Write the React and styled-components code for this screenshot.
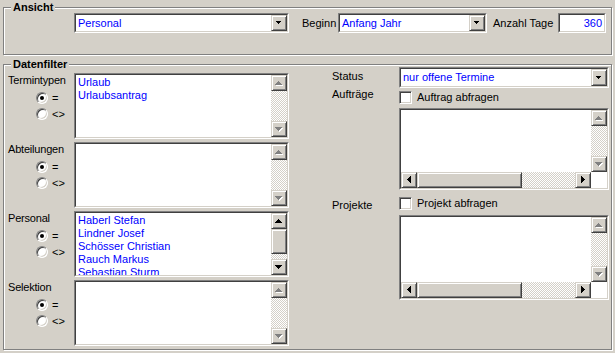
import React from 'react';
import styled, { createGlobalStyle } from 'styled-components';

const FACE = '#d4d0c8';
const SHADOW = '#808080';
const DARK = '#404040';
const BLUE = '#0000ff';

const GlobalStyle = createGlobalStyle`
  html, body { margin: 0; padding: 0; background: ${FACE}; }
  body {
    font-family: "Liberation Sans", Arial, sans-serif;
    font-size: 11px;
    line-height: 13px;
    color: #000;
  }
  * { box-sizing: border-box; }
`;

const Page = styled.div`
  width: 615px;
  height: 353px;
  padding: 0 3px;
  overflow: hidden;
`;

const Group = styled.fieldset`
  margin: ${p => p.$mt}px 0 0;
  padding: 0;
  min-width: 0;
  border: 1px solid ${SHADOW};
  box-shadow: inset 1px 1px 0 #fff, 1px 1px 0 #fff;
`;

const Legend = styled.legend`
  margin-left: 7px;
  padding: 0 2px;
  font-weight: bold;
  line-height: 5px;
  background: ${FACE};
`;

/* ---------- Ansicht ---------- */
const AnsichtBody = styled.div`
  display: flex;
  align-items: center;
  padding: 3px 5px 21px 70px;
`;

const InlineLabel = styled.span`
  flex: none;
  width: ${p => p.$w}px;
  margin-left: ${p => p.$ml || 0}px;
  white-space: nowrap;
`;

/* ---------- sunken frames ---------- */
const SunkenFrame = styled.div`
  flex: none;
  width: ${p => p.$w}px;
  height: ${p => p.$h}px;
  border: 1px solid;
  border-color: ${SHADOW} #fff #fff ${SHADOW};
  background: #fff;
`;

const SunkenInner = styled.div`
  height: 100%;
  border: 1px solid;
  border-color: ${DARK} ${FACE} ${FACE} ${DARK};
  display: flex;
  overflow: hidden;
`;

const FieldText = styled.div`
  flex: 1;
  min-width: 0;
  display: flex;
  align-items: center;
  justify-content: ${p => (p.$right ? 'flex-end' : 'flex-start')};
  padding: 0 2px;
  color: ${BLUE};
  white-space: nowrap;
  overflow: hidden;
`;

const Raised = styled.div`
  flex: none;
  width: ${p => p.$w || 16}px;
  height: ${p => (p.$h ? `${p.$h}px` : 'auto')};
  border: 1px solid;
  border-color: ${FACE} ${DARK} ${DARK} ${FACE};
  box-shadow: inset 1px 1px 0 #fff, inset -1px -1px 0 ${SHADOW};
  background: ${FACE};
`;

const ArrowSvg = styled.svg`
  display: block;
  flex: none;
`;

function Arrow({ dir, n, bw, bh, disabled }) {
  const vertical = dir === 'up' || dir === 'down';
  const w = vertical ? 2 * n - 1 : n;
  const h = vertical ? n : 2 * n - 1;
  const x0 = Math.floor((bw - w) / 2);
  const y0 = Math.floor((bh - h) / 2);
  const rects = [];
  for (let i = 0; i < n; i++) {
    if (dir === 'up') rects.push([x0 + n - 1 - i, y0 + i, 2 * i + 1, 1]);
    if (dir === 'down') rects.push([x0 + i, y0 + i, 2 * (n - 1 - i) + 1, 1]);
    if (dir === 'left') rects.push([x0 + i, y0 + n - 1 - i, 1, 2 * i + 1]);
    if (dir === 'right') rects.push([x0 + i, y0 + i, 1, 2 * (n - 1 - i) + 1]);
  }
  return (
    <ArrowSvg width={bw} height={bh} shapeRendering="crispEdges">
      {disabled &&
        rects.map(([x, y, rw, rh], i) => (
          <rect key={`s${i}`} x={x + 1} y={y + 1} width={rw} height={rh} fill="#fff" />
        ))}
      {rects.map(([x, y, rw, rh], i) => (
        <rect key={i} x={x} y={y} width={rw} height={rh} fill={disabled ? SHADOW : '#000'} />
      ))}
    </ArrowSvg>
  );
}

function Combo({ w, h, text }) {
  return (
    <SunkenFrame $w={w} $h={h}>
      <SunkenInner>
        <FieldText>{text}</FieldText>
        <Raised $w={16}>
          <Arrow dir="down" n={3} bw={14} bh={h - 6} />
        </Raised>
      </SunkenInner>
    </SunkenFrame>
  );
}

/* ---------- list boxes ---------- */
const ListGrid = styled.div`
  height: 100%;
  border: 1px solid;
  border-color: ${DARK} ${FACE} ${FACE} ${DARK};
  display: grid;
  grid-template-columns: 1fr 16px;
  grid-template-rows: ${p => (p.$hscroll ? '1fr 16px' : '1fr')};
  overflow: hidden;
`;

const Items = styled.div`
  min-height: 0;
  min-width: 0;
  overflow: hidden;
  padding: 1px 0 0 2px;
  color: ${BLUE};
  white-space: nowrap;
`;

const Item = styled.div`
  line-height: 13px;
`;

const VScroll = styled.div`
  min-height: 0;
  display: flex;
  flex-direction: column;
`;

const HScroll = styled.div`
  min-width: 0;
  display: flex;
`;

const Track = styled.div`
  flex: 1;
  background: repeating-conic-gradient(${FACE} 0 25%, #fff 0 50%) 0 0 / 2px 2px;
`;

const Corner = styled.div`
  background: #fff;
`;

function VBar({ enabled, thumb }) {
  return (
    <VScroll>
      <Raised $h={16}>
        <Arrow dir="up" n={4} bw={14} bh={14} disabled={!enabled} />
      </Raised>
      {thumb ? <Raised $h={thumb} /> : null}
      <Track />
      <Raised $h={16}>
        <Arrow dir="down" n={4} bw={14} bh={14} disabled={!enabled} />
      </Raised>
    </VScroll>
  );
}

function HBar({ thumb }) {
  return (
    <HScroll>
      <Raised $h={16}>
        <Arrow dir="left" n={4} bw={14} bh={14} />
      </Raised>
      <Raised $w={thumb} $h={16} />
      <Track />
      <Raised $h={16}>
        <Arrow dir="right" n={4} bw={14} bh={14} />
      </Raised>
    </HScroll>
  );
}

function ListBox({ w, h, items = [], enabled, thumb, hscroll }) {
  return (
    <SunkenFrame $w={w} $h={h}>
      <ListGrid $hscroll={hscroll}>
        <Items>
          {items.map(t => (
            <Item key={t}>{t}</Item>
          ))}
        </Items>
        <VBar enabled={enabled} thumb={thumb} />
        {hscroll && <HBar thumb={105} />}
        {hscroll && <Corner />}
      </ListGrid>
    </SunkenFrame>
  );
}

/* ---------- Datenfilter ---------- */
const FilterBody = styled.div`
  display: flex;
  align-items: flex-start;
  padding: 0 2px 3px 4px;
`;

const LeftCol = styled.div`
  display: flex;
  flex-direction: column;
  gap: 3px;
  padding-top: 6px;
`;

const FilterRow = styled.div`
  display: flex;
`;

const RowLabel = styled.div`
  flex: none;
  width: 66px;
`;

const LabelText = styled.div`
  margin-top: ${p => p.$dy || 0}px;
  white-space: nowrap;
  letter-spacing: ${p => (p.$tight ? '-0.2px' : 'normal')};
`;

const RadioGroup = styled.div`
  margin-top: 3px;
  padding-left: 28px;
  display: flex;
  flex-direction: column;
`;

const RadioRow = styled.div`
  height: 16px;
  display: flex;
  align-items: center;
  gap: 4px;
`;

const RadioCircle = styled.span`
  flex: none;
  width: 12px;
  height: 12px;
  border-radius: 50%;
  background: #fff;
  border: 1px solid;
  border-color: ${SHADOW} #fff #fff ${SHADOW};
  box-shadow: inset 1px 1px 0 ${DARK}, inset -1px -1px 0 ${FACE};
  display: flex;
  align-items: center;
  justify-content: center;
  &::after {
    content: '';
    display: ${p => (p.$checked ? 'block' : 'none')};
    width: 4px;
    height: 4px;
    border-radius: 50%;
    background: #000;
  }
`;

const RightCol = styled.div`
  flex: none;
  margin-left: 43px;
  width: 277px;
  display: flex;
  flex-direction: column;
`;

const FieldRow = styled.div`
  display: grid;
  grid-template-columns: 67px 210px;
  margin-top: ${p => p.$mt || 0}px;
`;

const CheckRow = styled.div`
  height: 13px;
  display: flex;
  align-items: center;
  gap: 5px;
  white-space: nowrap;
`;

const CheckBox = styled.span`
  flex: none;
  width: 13px;
  height: 13px;
  background: #fff;
  border: 1px solid;
  border-color: ${SHADOW} #fff #fff ${SHADOW};
  box-shadow: inset 1px 1px 0 ${DARK}, inset -1px -1px 0 ${FACE};
`;

function FilterBlock({ label, items, enabled, thumb }) {
  return (
    <FilterRow>
      <RowLabel>
        <LabelText $dy={1} $tight>{label}</LabelText>
        <RadioGroup>
          <RadioRow>
            <RadioCircle $checked />
            <span>=</span>
          </RadioRow>
          <RadioRow>
            <RadioCircle />
            <span>&lt;&gt;</span>
          </RadioRow>
        </RadioGroup>
      </RowLabel>
      <ListBox w={215} h={66} items={items} enabled={enabled} thumb={thumb} />
    </FilterRow>
  );
}

export default function App() {
  return (
    <>
      <GlobalStyle />
      <Page>
        <Group $mt={5}>
          <Legend>Ansicht</Legend>
          <AnsichtBody>
            <Combo w={215} h={20} text="Personal" />
            <InlineLabel $ml={13} $w={36}>Beginn</InlineLabel>
            <Combo w={149} h={20} text="Anfang Jahr" />
            <InlineLabel $ml={6} $w={65}>Anzahl Tage</InlineLabel>
            <SunkenFrame $w={48} $h={20}>
              <SunkenInner>
                <FieldText $right>360</FieldText>
              </SunkenInner>
            </SunkenFrame>
          </AnsichtBody>
        </Group>

        <Group $mt={7}>
          <Legend>Datenfilter</Legend>
          <FilterBody>
            <LeftCol>
              <FilterBlock label="Termintypen" items={['Urlaub', 'Urlaubsantrag']} />
              <FilterBlock label="Abteilungen" items={[]} />
              <FilterBlock
                label="Personal"
                items={[
                  'Haberl Stefan',
                  'Lindner Josef',
                  'Schösser Christian',
                  'Rauch Markus',
                  'Sebastian Sturm',
                ]}
                enabled
                thumb={25}
              />
              <FilterBlock label="Selektion" items={[]} />
            </LeftCol>

            <RightCol>
              <FieldRow>
                <LabelText $dy={3}>Status</LabelText>
                <Combo w={210} h={21} text="nur offene Termine" />
              </FieldRow>
              <FieldRow $mt={3}>
                <LabelText $dy={-3}>Aufträge</LabelText>
                <CheckRow>
                  <CheckBox />
                  <span>Auftrag abfragen</span>
                </CheckRow>
              </FieldRow>
              <FieldRow $mt={4}>
                <span />
                <ListBox w={210} h={82} hscroll />
              </FieldRow>
              <FieldRow $mt={7}>
                <LabelText $dy={2}>Projekte</LabelText>
                <CheckRow>
                  <CheckBox />
                  <span>Projekt abfragen</span>
                </CheckRow>
              </FieldRow>
              <FieldRow $mt={3}>
                <span />
                <ListBox w={210} h={85} hscroll />
              </FieldRow>
            </RightCol>
          </FilterBody>
        </Group>
      </Page>
    </>
  );
}
